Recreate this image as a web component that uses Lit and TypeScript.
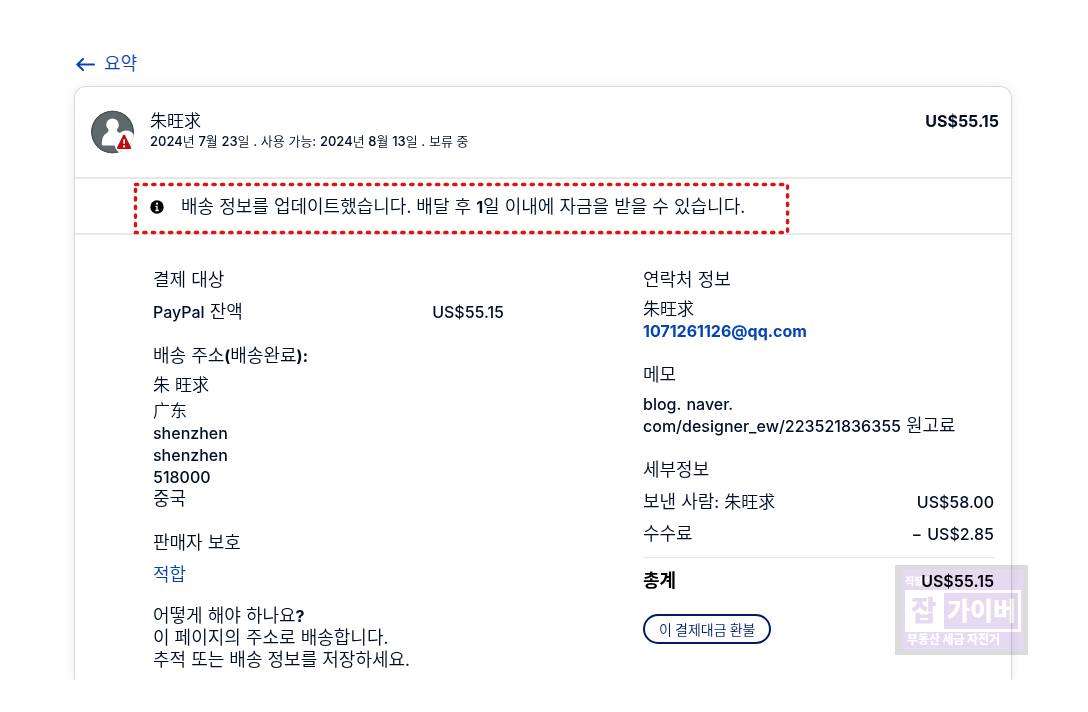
import { LitElement, html, css, svg } from "lit";
import { customElement } from "lit/decorators.js";

/* Wraps each run of text in the face of its script. */
const runs = (text: string) =>
  (text.match(/[\u4e00-\u9fff]+|[\uac00-\ud7a3 ]+|[^\u4e00-\u9fff\uac00-\ud7a3 ]+/g) ?? []).map((r) =>
    /[\u4e00-\u9fff]/.test(r)
      ? html`<span class="han">${r}</span>`
      : /[\uac00-\ud7a3 ]/.test(r)
        ? r
        : html`<span class="lat">${r}</span>`
  );

@customElement("app-root")
export class AppRoot extends LitElement {
  static styles = css`
    :host {
      display: block;
      min-height: 100vh;
      box-sizing: border-box;
      padding-bottom: 32px;
      background: #fff;
      color: #000d25;
      font: 350 18px/22px Inter, "Noto Sans CJK KR", sans-serif;
    }
    * { box-sizing: border-box; }
    h2, p { margin: 0; padding: 0; font: inherit; }
    .page { padding: 53px 76px 0 74px; overflow: hidden; }
    .lat { font-size: 16px; line-height: 16px; font-weight: 500; }
    .han { font-family: Inter, "Noto Sans CJK SC", sans-serif; font-size: 17px; line-height: 16px; }
    .strong { font-weight: 700; }
    .strong .lat { font-weight: 600; }
    .mark .lat, .bold .lat { font-weight: 700; }
    a { color: #0544b5; text-decoration: none; }
    .back { display: inline-flex; align-items: center; gap: 8px; padding-left: 2px; margin-bottom: 11px; }
    .back svg { display: block; margin-top: 2px; }
    .card {
      position: relative;
      min-height: 594px;
      border: 1px solid #d8d8d8;
      border-bottom: 0;
      border-radius: 12px 12px 0 0;
      box-shadow: 0 0 12px rgba(0, 0, 0, 0.08);
      clip-path: inset(-20px -20px 0);
    }
    .head { display: flex; align-items: flex-start; padding: 23px 12px 0 16px; height: 92px; border-bottom: 2px solid #e8e8e4; }
    .avatar { display: block; margin-right: 15px; }
    .who { flex: 1; }
    .date { font-size: 13px; line-height: 18px; }
    .date .lat { font-size: 13px; }
    .notice { height: 56px; padding: 4px 0 0 59px; border-bottom: 2px solid #e8e8e4; }
    .box { position: relative; display: inline-flex; align-items: center; height: 51px; padding: 0 44px 4px 16px; }
    .dots { position: absolute; inset: 0; width: 100%; height: 100%; overflow: visible; }
    .box .info { margin-right: 17px; }
    .body { display: grid; grid-template-columns: 1fr 1fr; gap: 139px; padding: 34px 17px 0 78px; }
    section { margin-bottom: 22px; }
    section:last-child { margin-bottom: 0; }
    h2 { margin-bottom: 7px; }
    .wide h2 { margin-bottom: 10px; }
    .safe { margin-bottom: 19px; }
    .row { display: flex; justify-content: space-between; }
    .row + .row { margin-top: 10px; }
    .drop { padding-top: 4px; }
    .row.total { margin-top: 12px; padding-top: 12px; border-top: 1px solid #e8e8e4; color: #000; }
    button {
      height: 30px;
      padding: 0 14px;
      border: 2px solid #001c64;
      border-radius: 15px;
      background: #fff;
      color: #001c64;
      font: 350 14px/20px "Noto Sans CJK KR", sans-serif;
    }
    .stamp {
      position: absolute;
      top: 478px;
      right: -17px;
      width: 133px;
      height: 90px;
      padding: 4px 5px 5px 7px;
      background: #dcdcdc;
      mix-blend-mode: multiply;
      color: #fff;
      font-weight: 900;
    }
    .plate { height: 81px; padding: 3px 2px 0 3px; background: #e4daf2; }
    .tag { font-size: 10px; line-height: 18px; }
    .name { display: flex; height: 42px; background: #fff; padding: 3px; font-size: 28px; line-height: 36px; }
    .job { width: 36px; padding-left: 3px; color: #e4daf2; }
    .gyver { flex: 1; padding-left: 3px; background: #e4daf2; font-size: 25px; }
    .foot { padding-left: 2px; font-size: 12px; line-height: 16px; }
  `;

  render() {
    return html`<main class="page">
      <a class="back" href="#">
        <svg width="20" height="16" viewBox="0 0 20 16" fill="none" stroke="#0544b5" stroke-width="2" stroke-linecap="round" stroke-linejoin="round" aria-hidden="true">
          <path d="M18 7.500H1.500M7 2L1.300 7.500 7 13" />
        </svg>
        <span>요약</span>
      </a>
      <article class="card">
        <header class="head">
          <svg class="avatar" width="44" height="44" viewBox="0 0 44 44" aria-hidden="true">
            <clipPath id="disc"><circle cx="21.5" cy="22" r="21.5" /></clipPath>
            <g clip-path="url(#disc)">
              <circle cx="21.5" cy="22" r="21.5" fill="#5f686b" />
              <circle cx="21.5" cy="22" r="20.7" fill="none" stroke="#4c5558" stroke-width="1.6" />
              <path fill="#fff" d="M21.5 8.5a6.3 6.3 0 0 1 6.3 6.3c0 2.2-.8 3.7-2 4.8 0 2 1 2.6 3 3.400a9.500 9.500 0 0 1 6-2.400c5 0 9.500 3 9.500 11.500S40 44 33 44c-5 0-8-4-9.500-8.500H12c-1 0-1.300-.5-1.200-1.500.4-6 1.600-9 4.200-10.500 1.800-1 2.500-1.700 2.500-3.900a6.200 6.200 0 0 1-2.300-4.800 6.300 6.300 0 0 1 6.300-6.300z" />
            </g>
            <path fill="#bd0d10" d="M32.100 25.300c.6-1 1.300-1 1.900 0l6 12c.5 1.100.1 1.700-1 1.700H27.200c-1.100 0-1.500-.6-1-1.700z" />
            <path d="M33.100 29.500v4.300" stroke="#fff" stroke-width="1.800" /><circle cx="33.100" cy="36.400" r="1.100" fill="#fff" />
          </svg>
          <div class="who">
            <p>${runs("朱旺求")}</p>
            <p class="date">${runs("2024년 7월 23일 . 사용 가능: 2024년 8월 13일 . 보류 중")}</p>
          </div>
          <p class="bold">${runs("US$55.15")}</p>
        </header>
        <div class="notice">
          <div class="box">
            <svg class="dots" aria-hidden="true">
              ${svg`<rect x="1.500" y="1.500" style="width:calc(100% - 3px);height:calc(100% - 3px)" fill="none" stroke="#dc1414" stroke-width="3.400" stroke-linecap="round" stroke-dasharray="2.300 6.300" />`}
            </svg>
            <svg class="info" width="14" height="14" viewBox="0 0 14 14" aria-hidden="true">
              <circle cx="7" cy="7" r="6.700" fill="#000" />
              <circle cx="7" cy="3.700" r="1.100" fill="#fff" />
              <path d="M5.500 6.300H7v4M5.300 10.500h3.500" fill="none" stroke="#fff" stroke-width="1.300" />
            </svg>
            <p>${runs("배송 정보를 업데이트했습니다. 배달 후 ")}<span class="bold">${runs("1")}</span>${runs("일 이내에 자금을 받을 수 있습니다.")}</p>
          </div>
        </div>
        <div class="body">
          <div>
            <section class="wide">
              <h2>결제 대상</h2>
              <div class="row"><span>${runs("PayPal 잔액")}</span><span>${runs("US$55.15")}</span></div>
            </section>
            <section>
              <h2 class="mark">${runs("배송 주소(배송완료):")}</h2>
              <p>${runs("朱 旺求")}</p>
              <p class="drop">${runs("广东")}</p>
              <p>${runs("shenzhen")}</p>
              <p>${runs("shenzhen")}</p>
              <p>${runs("518000")}</p>
              <p>중국</p>
            </section>
            <section class="wide safe">
              <h2>판매자 보호</h2>
              <p><a href="#">적합</a></p>
            </section>
            <section>
              <p class="mark">${runs("어떻게 해야 하나요?")}</p>
              <p>${runs("이 페이지의 주소로 배송합니다.")}</p>
              <p>${runs("추적 또는 배송 정보를 저장하세요.")}</p>
            </section>
          </div>
          <div>
            <section>
              <h2>연락처 정보</h2>
              <p>${runs("朱旺求")}</p>
              <p class="bold"><a href="mailto:1071261126@qq.com">${runs("1071261126@qq.com")}</a></p>
            </section>
            <section>
              <h2>메모</h2>
              <p>${runs("blog. naver.")}</p>
              <p>${runs("com/designer_ew/223521836355 원고료")}</p>
            </section>
            <section class="wide">
              <h2>세부정보</h2>
              <div class="row"><span>${runs("보낸 사람: 朱旺求")}</span><span>${runs("US$58.00")}</span></div>
              <div class="row"><span>수수료</span><span>${runs("− US$2.85")}</span></div>
              <div class="row total strong"><span>총계</span><span>${runs("US$55.15")}</span></div>
            </section>
            <button type="button">이 결제대금 환불</button>
          </div>
        </div>
        <div class="stamp" aria-hidden="true">
          <div class="plate">
            <div class="tag">직장인</div>
            <div class="name"><span class="job">잡</span><span class="gyver">가이버</span></div>
            <div class="foot">부동산 세금 자전거</div>
          </div>
        </div>
      </article>
    </main>`;
  }
}
